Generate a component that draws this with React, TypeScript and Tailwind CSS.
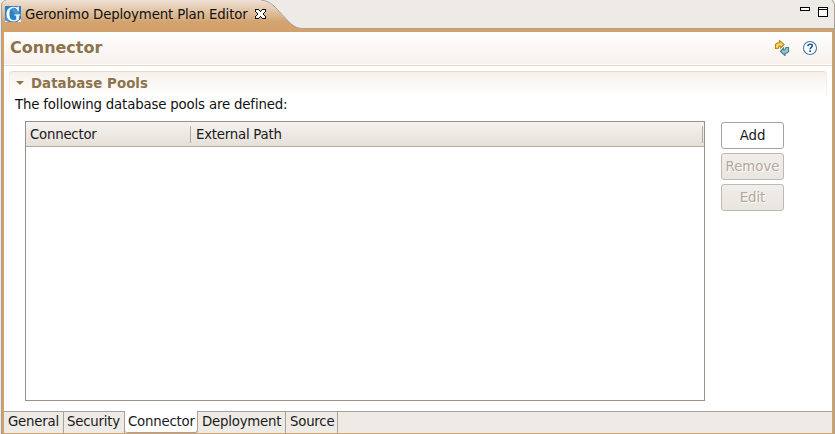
import React from "react";

const text = "whitespace-nowrap leading-4";

function GeronimoLogo() {
  return (
    <svg width="16" height="16" viewBox="0 0 16 16" className="shrink-0">
      <rect width="16" height="16" fill="#2b80c6" />
      <path d="M5 2H9L15 8V13Z" fill="#62a9dc" opacity=".6" />
      <path d="M0 9L6 15H0Z" fill="#62a9dc" opacity=".5" />
      <path d="M12.800 .5H13.800V5.500H12.800C12.200 3 10.800 1.800 8.800 1.800C5.800 1.800 4.400 4.200 4.400 8C4.400 11.800 5.800 14.200 8.800 14.200C10 14.200 10.800 13.900 11.300 13.300V9.800L9 9.200V8.400H15.500V9.200L13.800 9.800V13.700C12.500 14.800 10.800 15.400 8.500 15.400C4 15.400 1.500 12.400 1.500 8C1.500 3.700 4.200 .7 8.500 .7C10 .7 11.300 1 12.200 1.600Z" fill="#fff" />
      <path d="M0 14.500L4 16H0ZM12 16L16 13V16Z" fill="#fff" opacity=".9" />
    </svg>
  );
}

function CloseIcon() {
  return (
    <svg width="11" height="10" viewBox="0 0 11 10" shapeRendering="crispEdges">
      <path d="M.5 .5H3.500L5.500 2.500L7.500 .5H10.500V2.500L8 5L10.500 7.500V9.500H7.500L5.500 7.500L3.500 9.500H.5V7.500L3 5L.5 2.500Z" fill="#fff" stroke="#111" />
    </svg>
  );
}

function TitleBar() {
  return (
    <div className="relative h-8 shrink-0 bg-[#eeebe6]">
      <svg width="835" height="32" className="absolute inset-0">
        <defs>
          <linearGradient id="tab" gradientUnits="userSpaceOnUse" x1="0" y1="0" x2="0" y2="32">
            <stop offset="0" stopColor="#eee1d5" />
            <stop offset=".3" stopColor="#e3c7aa" />
            <stop offset=".7" stopColor="#d3a26e" />
            <stop offset="1" stopColor="#d2a16b" />
          </linearGradient>
        </defs>
        <path d="M1 32V6C1 3 3 0 7 0H261C271 2 276 8 282 15C289 22 294 28 303 29H835V32Z" fill="url(#tab)" />
        <path d="M1.500 32V6C1.500 3 3 .5 6 0M261 0C271 1 276 8 282 14.500C289 21.500 293 28.500 303 28.500H835" fill="none" stroke="#aaa096" />
        <path d="M832 0L834.500 4V32" fill="none" stroke="#aaa096" />
        <path d="M0 0H5L2 2L0 5Z" fill="#eeebe6" />
      </svg>
      <div className="relative flex h-7 items-center pl-[5px]">
        <GeronimoLogo />
        <span className={`${text} ml-1 mt-0.5 w-[222px] text-[13.33px] tracking-[-0.15px]`}>Geronimo Deployment Plan Editor</span>
        <div className="ml-2"><CloseIcon /></div>
        <div className="mb-1 ml-auto mr-[7px] flex h-[10px] items-start gap-2">
          <div className="h-1 w-[10px] border border-black bg-white" />
          <div className="h-[10px] w-[10px] border border-black bg-white pt-px"><div className="h-px bg-black" /></div>
        </div>
      </div>
    </div>
  );
}

function FormHeader() {
  return (
    <div className="flex h-[34px] shrink-0 items-center border-b border-[#ead8c6] bg-linear-to-b from-white to-[#f6f0eb] pl-1.5 pr-[14px] shadow-[inset_0_-1px_0_white]">
      <h1 className="mb-0.5 text-[16px] font-bold leading-5 text-[#8c734b]">Connector</h1>
      <svg width="16" height="16" viewBox="0 0 16 16" className="mb-0.5 ml-auto">
        <path d="M1.500 8.500V4.500L3 3H5.500V.6L10 4.500L6.500 8V6H5L4 8.500Z" fill="#fbdc70" stroke="#bd861c" strokeWidth="1.200" />
        <path d="M14.500 7.500V11.500L13 13H11V15.400L6.500 11.500L9.500 8V10H11L12 7.500Z" fill="#9fcdd4" stroke="#467f8e" strokeWidth="1.200" />
      </svg>
      <svg width="16" height="16" viewBox="0 0 16 16" className="mb-0.5 ml-3">
        <circle cx="8" cy="8" r="6.500" fill="#fff" stroke="#4679a8" strokeWidth="1.100" />
        <path d="M5.900 6.200C5.900 4.800 6.800 4.300 8.100 4.300C9.500 4.300 10.200 5 10.200 5.900C10.200 7.300 8.100 7.400 8.100 9.200" fill="none" stroke="#1d5c99" strokeWidth="1.600" />
        <rect x="7.200" y="10.300" width="1.800" height="1.700" fill="#1d5c99" />
      </svg>
    </div>
  );
}

function ActionButton({ label, disabled }: { label: string; disabled?: boolean }) {
  return (
    <button
      disabled={disabled}
      className={`${text} flex h-[27px] w-[63px] items-center justify-center rounded-[3px] border text-[13.33px] tracking-[-0.05px] ${
        disabled ? "border-[#bdb9b5] bg-linear-to-b from-[#f1eeeb] to-[#e9e5e0] text-[#b5a79b] [text-shadow:1px_1px_0_white]" : "border-[#a4a2a1] bg-white text-[#1a1a1a]"
      }`}
    >
      {label}
    </button>
  );
}

function PoolTable() {
  return (
    <div className="h-[280px] w-[680px] border border-[#9d9084] bg-white">
      <div className="flex h-[25px] items-center border-b border-[#b5a89c] bg-linear-to-b from-[#f4f2f0] to-[#e7e0da] text-[13.33px] tracking-[-0.24px] text-[#1a1a1a]">
        <div className="flex h-[17px] w-[165px] items-end border-r border-[#b9aa9d] pl-1"><span className={text}>Connector</span></div>
        <div className="flex h-[17px] w-[512px] items-end border-r border-[#b9aa9d] pl-[5px]"><span className={text}>External Path</span></div>
      </div>
    </div>
  );
}

const pages = [
  { label: "General", width: "w-[60px] pl-1" },
  { label: "Security", width: "w-[61px] pl-[3px]" },
  { label: "Connector", width: "w-[73px] pl-[3px]" },
  { label: "Deployment", width: "w-[88px] pl-1" },
  { label: "Source", width: "w-[52px] pl-1" },
];

function PageTabs() {
  return (
    <div className="flex h-[22px] shrink-0 bg-[#eeebe6] text-[13.33px] tracking-[-0.23px] text-[#1a1a1a]">
      {pages.map((p) => (
        <div key={p.label} className={`${p.width} flex items-start border-r border-[#aaa096] ${p.label === "Connector" ? "rounded-b-[3px] border-b bg-white pt-[3px]" : "border-t pt-0.5"}`}>
          <span className={text}>{p.label}</span>
        </div>
      ))}
      <div className="flex-1 border-t border-[#aaa096]" />
    </div>
  );
}

export default function App() {
  return (
    <div className="flex h-[434px] w-[835px] flex-col overflow-hidden bg-[#eeebe6] font-['DejaVu_Sans',sans-serif] text-[#111]">
      <TitleBar />
      <div className="flex min-h-0 flex-1">
        <div className="w-px bg-[#eeebe6]" />
        <div className="w-px bg-[#aaa096]" />
        <div className="flex min-w-0 flex-1 flex-col border-x-2 border-b border-[#d2a16b] bg-white">
          <FormHeader />
          <main className="flex flex-1 flex-col px-[5px] pt-[5px]">
            <div className="flex h-6 items-center rounded-t-[4px] border-t border-[#ead8c6] bg-linear-to-b from-[#f6f0eb] to-white pl-[7px] shadow-[inset_1px_0_0_#f6eee7,inset_-1px_0_0_#f6eee7]">
              <svg width="8" height="4" className="mb-px"><path d="M0 0H8L4 4Z" fill="#8c734b" /></svg>
              <h2 className={`${text} ml-[7px] text-[13.33px] font-bold tracking-[0.06px] text-[#8c734b]`}>Database Pools</h2>
            </div>
            <p className={`${text} ml-1.5 mt-0.5 text-[13.33px] tracking-[-0.17px]`}>The following database pools are defined:</p>
            <div className="ml-4 mt-2 flex gap-4">
              <PoolTable />
              <div className="mt-px flex flex-col gap-1">
                <ActionButton label="Add" />
                <ActionButton label="Remove" disabled />
                <ActionButton label="Edit" disabled />
              </div>
            </div>
          </main>
          <PageTabs />
        </div>
        <div className="w-px bg-[#aaa096]" />
      </div>
    </div>
  );
}
